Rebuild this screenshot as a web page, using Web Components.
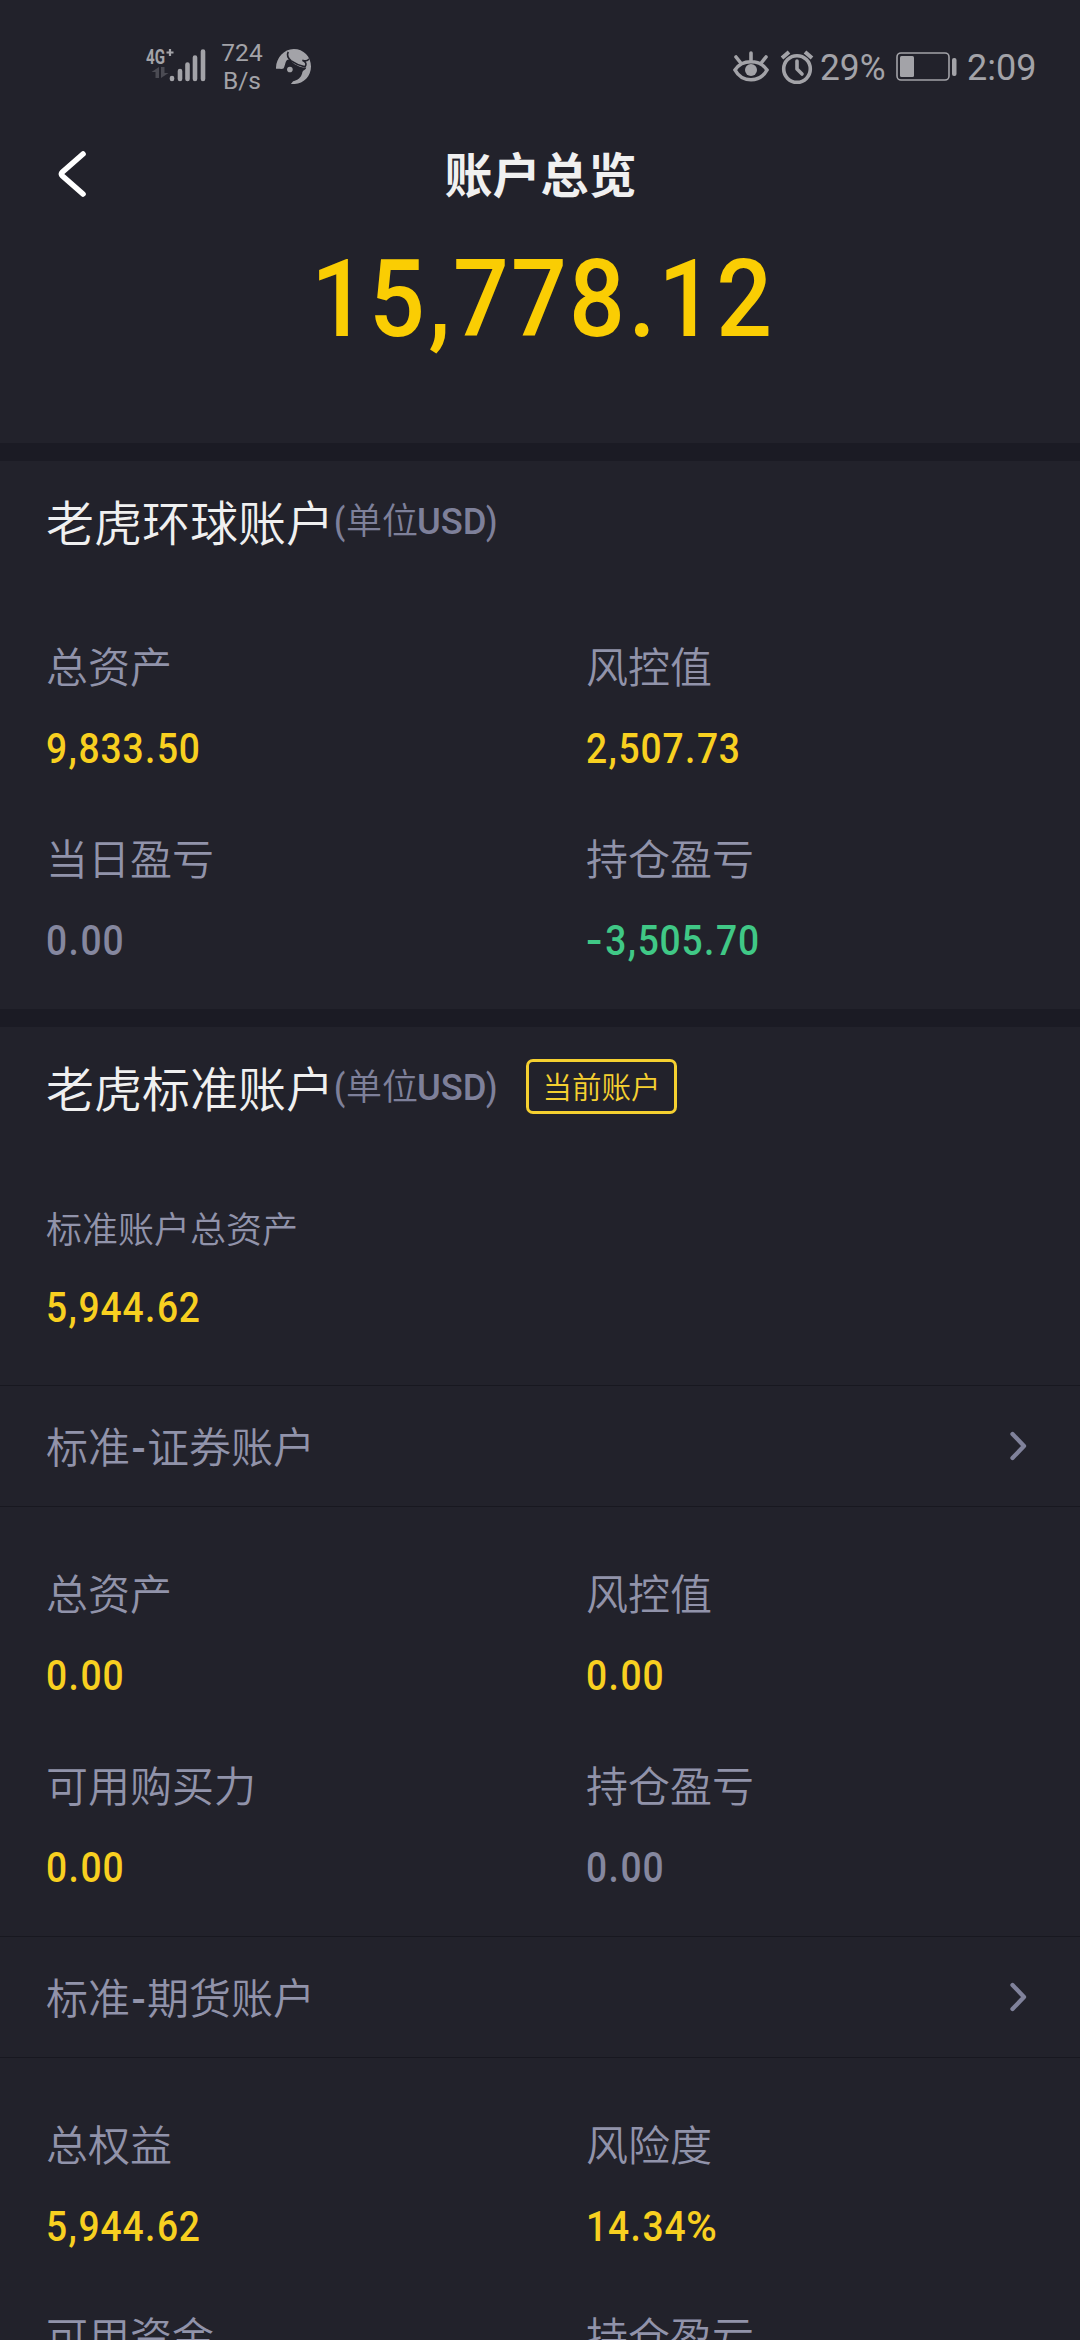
<!DOCTYPE html>
<html lang="zh-CN">
<head>
<meta charset="utf-8">
<title>账户总览</title>
<style>
html,body{margin:0;padding:0;background:#22222b}
body{width:1080px;height:2340px;overflow:hidden;font-family:Roboto,"Noto Sans CJK SC",sans-serif}
</style>
</head>
<body>
<account-page></account-page>
<script>
const define = (name, html, setup) => customElements.define(name, class extends HTMLElement {
  constructor() {
    super();
    const t = document.createElement('template');
    t.innerHTML = html;
    this.attachShadow({mode: 'open'}).append(t.content.cloneNode(true));
  }
  connectedCallback() { if (setup) setup(this, this.shadowRoot); }
});

define('status-bar', `
<style>
:host{display:flex;height:130px;box-sizing:border-box;padding:43px 0 0 145px;color:#a3a3a8;font:400 36px Roboto,sans-serif}
svg{display:block;flex:none}
.net{width:62px;height:42px}
.rate{width:50px;margin-left:10px;text-align:center;font-size:24.500px;line-height:28px;margin-top:-4px;height:56px}
.app{margin:6px 0 0 9px}
.right{display:flex;margin-left:421px}
.t{line-height:42px;margin-top:4px;transform-origin:0 50%}
</style>
<svg class="net" viewBox="0 0 62 42">
  <text x="1" y="21" font-family="Roboto" font-weight="700" font-size="21" textLength="19" lengthAdjust="spacingAndGlyphs" fill="#a3a3a8">4G</text>
  <path d="M21.500 9.500h7M25 6v7" stroke="#a3a3a8" stroke-width="2.200"/>
  <path fill="#4b4b53" d="M14 24v11h-3.500v-6H6.500zM16 24h3.500v6h4L16 35z"/>
  <g stroke="#a3a3a8" stroke-width="4.600" stroke-linecap="round"><path d="M27 35v1M35 28v8M42.500 21.500V36M50 14.500V36M58 8.500V36"/></g>
</svg>
<div class="rate">724<br>B/s</div>
<svg class="app" width="35" height="35" viewBox="0 0 106 106">
  <path fill="#a3a3a8" d="M0 60C-1 30 22 0 54 0C83 0 106 23 106 53C106 83 82 107 53 106L45 106C51 101 49 98 55 97C72 92 78 82 80 70C82 64 90 63 92 57C74 56 58 48 48 39C42 31 38 30 32 35C27 42 26 60 21 60C14 61 8 59 0 60Z"/>
  <path fill="none" stroke="#22222b" stroke-width="5" d="M37 9C32 19 35 27 46 36C60 46 70 50 88 54C93 46 92 40 80 34C88 37 95 38 100 30"/>
  <circle cx="42" cy="62" r="8.500" fill="#a3a3a8"/>
</svg>
<div class="right">
<svg style="margin-top:7px" width="38" height="34" viewBox="0 0 38 34" fill="none" stroke="#a3a3a8" stroke-width="3.600" stroke-linecap="round"><path d="M3 20C10 9 28 9 35 20C28 33 10 33 3 20ZM19 3v7M4 7l4 5M34 7l-4 5"/><circle cx="19" cy="20" r="6" fill="#a3a3a8" stroke="none"/></svg>
<svg style="margin:6px 0 0 10px" width="34" height="36" viewBox="0 0 34 36" fill="none" stroke="#a3a3a8" stroke-width="3.600" stroke-linecap="round"><circle cx="17" cy="20" r="13.300"/><path d="M17 12v8l5 5" stroke-linejoin="round"/><path stroke-linecap="butt" d="M2 9l7-6M32 9l-7-6" stroke-width="4"/></svg>
<div class="t" style="width:75px;margin-left:6px;transform:scaleX(.98)">29%</div>
<svg style="margin:8px 0 0 0" width="64" height="32" viewBox="0 0 64 32"><rect x="2" y="2" width="52" height="27" rx="4" fill="none" stroke="#a3a3a8" stroke-width="1.600"/><rect x="5" y="5" width="14" height="21" rx="1.500" fill="#a3a3a8"/><rect x="57" y="7" width="4.500" height="18" rx="2" fill="#a3a3a8"/></svg>
<div class="t" style="margin-left:8px">2:09</div>
</div>`);

define('din-num', `
<style>
:host{display:block;color:#f8d020;font:500 42px/60px Roboto,sans-serif;white-space:nowrap}
:host([tone=gray]){color:#85879f}
:host([tone=green]){color:#40c886}
:host([size=big]){font-size:108px;line-height:120px;color:#facd03}
b{font-weight:inherit;display:inline-block;transform:scaleX(var(--sx,.885));transform-origin:0 50%;letter-spacing:.022em}
i{font-style:normal;letter-spacing:.045em;margin-left:.015em}
:host([size=big]) i{letter-spacing:.025em}
i.h,i.p{display:inline-block;transform:scaleX(1.3);transform-origin:0 50%;margin:0 .13em 0 0}
i.p{transform:scaleX(1.13);letter-spacing:0}
</style><b></b>`, (el, root) => {
  const b = root.querySelector('b');
  b.replaceChildren();
  for (const part of el.getAttribute('value').split(/([.,%-])/)) {
    if (/^[.,%-]$/.test(part)) {
      const i = document.createElement('i');
      i.textContent = part;
      if (part === '-') i.className = 'h';
      if (part === '%') i.className = 'p';
      b.append(i);
    } else b.append(part);
  }
});

define('nav-header', `
<style>
:host{display:block;height:313px;color:#f0f0f0}
.bar{display:flex;align-items:center;height:88px;padding:0 56px}
.bar svg{width:32px;flex:none}
h1{flex:1;margin:0 31px 4px 0;text-align:center;font:700 48px/70px "Noto Sans CJK SC",sans-serif}
.sum{display:flex;padding:21px 0 0 311px}
</style>
<div class="bar"><svg width="32" height="50" viewBox="0 0 32 50"><path d="M27 5L6.500 23Q4.500 25 6.500 27L27 45" fill="none" stroke="#fff" stroke-width="5.600" stroke-linecap="round"/></svg><h1><slot></slot></h1></div>
<div class="sum"><din-num size="big" value="15,778.12" style="--sx:.91"></din-num></div>`);

define('account-section', `
<style>
:host{display:block;border-top:18px solid #1b1b24}
header{display:flex;align-items:center;height:118px;padding:0 0 4px 46px;color:#f0f0f0}
h2{margin:0;font:350 48px/70px "Noto Sans CJK SC",sans-serif}
.unit{color:#7e809a;font:350 36px/60px Roboto,"Noto Sans CJK SC",sans-serif;display:flex;width:162px;white-space:nowrap;padding-top:3px}
.unit span{display:inline-block;transform-origin:0 50%}
.unit .u{font-weight:500}
</style>
<header><h2></h2><div class="unit"><span class="u" style="width:12px;transform:scaleX(.9)">(</span><span style="width:71px">单位</span><span class="u" style="width:70px;transform:scaleX(1.01)">USD</span><span class="u" style="transform:scaleX(.9)">)</span></div><slot name="badge"></slot></header>
<slot></slot>`, (el, root) => { root.querySelector('h2').textContent = el.getAttribute('name'); });

define('current-badge', `
<style>:host{display:block;box-sizing:border-box;width:151px;height:55px;margin-left:30px;border:3px solid #f5d030;border-radius:7px;color:#f5d030;text-align:center;font:350 29.500px/47px "Noto Sans CJK SC",sans-serif}</style><slot></slot>`);

define('stat-grid', `
<style>:host{display:grid;grid-template-columns:540px 540px;row-gap:48px;padding:55px 0 38px}:host([first]){padding-top:52px}:host([single]){padding:48px 0 47px}</style><slot></slot>`);

define('stat-cell', `
<style>
:host{display:flex;flex-direction:column;gap:24px;padding-left:46px}
.l{color:#9193aa;font:350 42px/60px "Noto Sans CJK SC",sans-serif}
:host([small]){gap:21px}:host([small]) .l{font-size:36px}
</style><div class="l"></div>`, (el, root) => {
  root.querySelector('.l').textContent = el.getAttribute('label');
  const num = document.createElement('din-num');
  num.setAttribute('value', el.getAttribute('value'));
  num.setAttribute('tone', el.getAttribute('tone'));
  root.append(num);
});

define('link-row', `
<style>
:host{display:flex;align-items:center;justify-content:space-between;height:120px;padding:0 50px 0 46px;border:solid #181820;border-width:1px 0;color:#9193aa;font:350 42px/60px "Noto Sans CJK SC",sans-serif}
div{padding-top:2px}
i{font:500 42px/60px Roboto,sans-serif;display:inline-block;width:17px;text-align:center}
</style>
<div><span class="a"></span><i>-</i><span class="b"></span></div>
<svg width="22" height="34" viewBox="0 0 22 34"><path d="M4.500 5L16 17L4.500 29" fill="none" stroke="#80829b" stroke-width="4.300" stroke-linecap="round" stroke-linejoin="round"/></svg>`, (el, root) => {
  const [a, b] = el.getAttribute('name').split('-');
  root.querySelector('.a').textContent = a;
  root.querySelector('.b').textContent = b;
});

const cell = (label, value, tone = '', extra = '') => `<stat-cell label="${label}" value="${value}" tone="${tone}" ${extra}></stat-cell>`;
define('account-page', `
<style>:host{display:block;width:1080px;height:2340px;overflow:hidden;background:#22222b}</style>
<status-bar></status-bar>
<nav-header>账户总览</nav-header>
<account-section name="老虎环球账户"><stat-grid first>
${cell('总资产','9,833.50')}${cell('风控值','2,507.73')}${cell('当日盈亏','0.00','gray')}${cell('持仓盈亏','-3,505.70','green')}
</stat-grid></account-section>
<account-section name="老虎标准账户"><current-badge slot="badge">当前账户</current-badge>
<stat-grid single>${cell('标准账户总资产','5,944.62','','small')}</stat-grid>
<link-row name="标准-证券账户"></link-row>
<stat-grid>${cell('总资产','0.00')}${cell('风控值','0.00')}${cell('可用购买力','0.00')}${cell('持仓盈亏','0.00','gray')}</stat-grid>
<link-row name="标准-期货账户"></link-row>
<stat-grid>${cell('总权益','5,944.62')}${cell('风险度','14.34%')}<stat-cell label="可用资金" value="" tone=""></stat-cell><stat-cell label="持仓盈亏" value="" tone=""></stat-cell></stat-grid>
</account-section>`);
</script>
</body>
</html>
